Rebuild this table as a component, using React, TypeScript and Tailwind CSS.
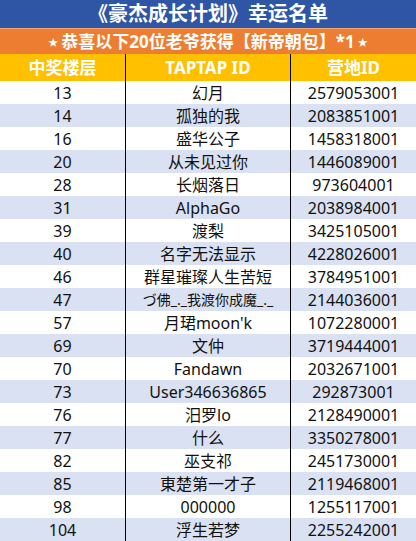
import React from "react";

const rows: [string, string, string][] = [
  ["13", "幻月", "2579053001"],
  ["14", "孤独的我", "2083851001"],
  ["16", "盛华公子", "1458318001"],
  ["20", "从未见过你", "1446089001"],
  ["28", "长烟落日", "973604001"],
  ["31", "AlphaGo", "2038984001"],
  ["39", "渡梨", "3425105001"],
  ["40", "名字无法显示", "4228026001"],
  ["46", "群星璀璨人生苦短", "3784951001"],
  ["47", "づ佛_._我渡你成魔_._", "2144036001"],
  ["57", "月珺moon'k", "1072280001"],
  ["69", "文仲", "3719444001"],
  ["70", "Fandawn", "2032671001"],
  ["73", "User346636865", "292873001"],
  ["76", "汨罗lo", "2128490001"],
  ["77", "什么", "3350278001"],
  ["82", "巫支祁", "2451730001"],
  ["85", "東楚第一才子", "2119468001"],
  ["98", "000000", "1255117001"],
  ["104", "浮生若梦", "2255242001"],
];

const font = { fontFamily: '"Noto Sans", "Noto Sans CJK SC", sans-serif' };

export default function App() {
  return (
    <div className="w-[416px] h-[541px] overflow-hidden bg-white" style={font}>
      <div className="h-[28px] bg-[#2f55a5] text-white font-bold text-[20px] leading-none flex items-center justify-center">
        《豪杰成长计划》幸运名单
      </div>
      <div className="h-[26px] bg-[#ed7d31] border-t border-[#f3a777] text-white font-bold text-[17px] leading-none flex items-center justify-center gap-[3px]">
        <span className="text-[10px]">★</span>
        <span>恭喜以下20位老爷获得【新帝朝包】*1</span>
        <span className="text-[10px]">★</span>
      </div>
      <div className="grid grid-cols-[125px_165px_126px] h-[27px] bg-[#ffc000] text-white font-bold text-[17px] leading-none">
        <div className="flex items-center justify-center">中奖楼层</div>
        <div className="flex items-center justify-center border-l border-black">TAPTAP ID</div>
        <div className="flex items-center justify-center border-l border-black">营地ID</div>
      </div>
      {rows.map((r, i) => (
        <div
          key={r[0]}
          className={
            "grid grid-cols-[125px_165px_126px] h-[23px] text-[16px] leading-none text-[#111] " +
            (i % 2 === 0 ? "bg-white" : "bg-[#d9e1f2]")
          }
        >
          <div className="flex items-center justify-center">{r[0]}</div>
          <div
            className={
              "flex items-center justify-center border-l border-black whitespace-nowrap " +
              (r[0] === "47" ? "text-[14px]" : "")
            }
          >
            {r[1]}
          </div>
          <div className="flex items-center justify-center border-l border-black">{r[2]}</div>
        </div>
      ))}
    </div>
  );
}
